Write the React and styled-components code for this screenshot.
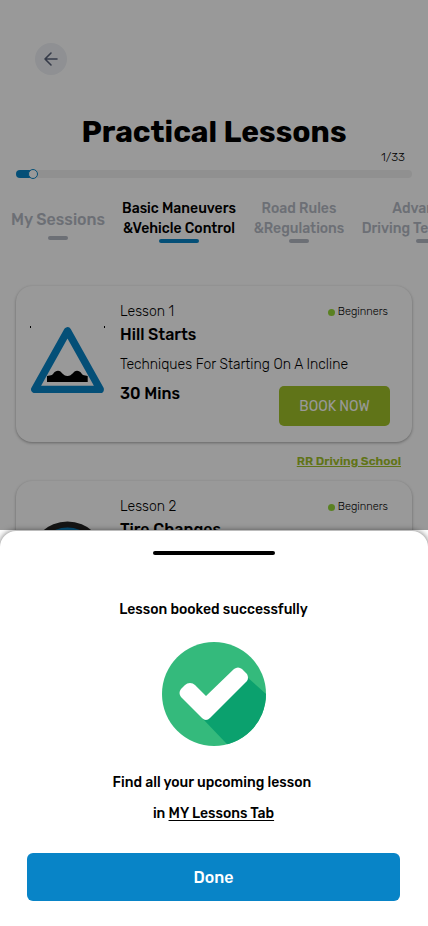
import React, { useState } from "react";
import styled, { createGlobalStyle } from "styled-components";

const blue = "#0884c7";
const lime = "#a1c128";
const muted = "#b4b9c4";

const GlobalStyle = createGlobalStyle`
  *, *::before, *::after { box-sizing: border-box; }
  body {
    margin: 0;
    background: #fff;
    color: #000;
    font-family: Rubik, Inter, "Liberation Sans", sans-serif;
  }
  button { font: inherit; border: 0; padding: 0; cursor: pointer; }
  h1, h2, p { margin: 0; }
`;

const Screen = styled.div`
  display: flex;
  flex-direction: column;
  height: 100vh;
  overflow: hidden;
`;

const Lessons = styled.main`
  position: relative;
  flex: 1;
  min-height: 0;
  overflow: hidden;
`;

const Scrim = styled.div`
  position: absolute;
  inset: 0;
  background: rgba(0, 0, 0, 0.4);
`;

const BackButton = styled.button`
  display: grid;
  place-items: center;
  width: 32px;
  height: 32px;
  margin: 43px 0 0 35px;
  border-radius: 50%;
  background: #eef1f5;
`;

const Title = styled.h1`
  margin-top: 40px;
  font-size: 30px;
  line-height: 34px;
  font-weight: 700;
  text-align: center;
  white-space: nowrap;
`;

const Progress = styled.label`
  display: flex;
  flex-direction: column;
  padding: 0 16px;
`;

const Count = styled.span`
  align-self: flex-end;
  margin-right: 7px;
  font-size: 12px;
  line-height: 16px;
  font-weight: 300;
`;

const Slider = styled.input`
  appearance: none;
  width: 100%;
  height: 8px;
  margin: 5px 0 0;
  border-radius: 4px;
  background: linear-gradient(${blue}, ${blue}) 0 0 / 16px 100% no-repeat #f1f1f1;

  &::-webkit-slider-thumb {
    appearance: none;
    width: 10px;
    height: 10px;
    border: 1px solid ${blue};
    border-radius: 50%;
    background: #fff;
  }
`;

const Tabs = styled.nav`
  display: grid;
  grid-template-columns: 94px 114px 92px 128px;
  column-gap: 17px;
  align-items: end;
  margin-top: 21px;
  padding-left: 11px;
`;

const Tab = styled.button`
  display: flex;
  flex-direction: column;
  align-items: center;
  gap: ${(p) => (p.$single ? 6 : 0)}px;
  padding-bottom: ${(p) => (p.$single ? 3 : 0)}px;
  background: none;
  color: ${(p) => (p.$active ? "#000" : muted)};
  font-size: ${(p) => (p.$single ? 16 : 14)}px;
  line-height: 20px;
  font-weight: 500;
  white-space: nowrap;

  &::after {
    content: "";
    width: ${(p) => (p.$active ? 40 : 20)}px;
    height: 4px;
    border-radius: 2px;
    background: ${(p) => (p.$active ? blue : muted)};
  }
`;

const List = styled.section`
  display: flex;
  flex-direction: column;
  margin-top: 43px;
  padding: 0 16px;
`;

const Card = styled.article`
  display: grid;
  grid-template-columns: 75px 1fr;
  column-gap: 15px;
  min-height: 156px;
  padding: 16px 22px 16px 14px;
  border-radius: 16px;
  background: #fff;
  box-shadow: 0 1px 3px rgba(0, 0, 0, 0.35);
`;

const Sign = styled.svg`
  display: block;
  width: 75px;
  height: 75px;
  margin-top: 20px;
`;

const Details = styled.div`
  display: flex;
  flex-direction: column;
  white-space: nowrap;
`;

const Row = styled.div`
  display: flex;
  justify-content: space-between;
  align-items: flex-start;
`;

const Light = styled.p`
  font-size: 14px;
  line-height: 20px;
  font-weight: 300;
`;

const Strong = styled.p`
  font-size: 16px;
  line-height: 20px;
  font-weight: 500;
`;

const Name = styled(Strong).attrs({ as: "h2" })`
  margin: 3px 0 10px;
`;

const Level = styled.span`
  display: flex;
  align-items: center;
  gap: 3px;
  margin-right: 2px;
  font-size: 11px;
  line-height: 20px;
  font-weight: 300;

  &::before {
    content: "";
    width: 7px;
    height: 7px;
    border-radius: 50%;
    background: #97d83a;
  }
`;

const Booking = styled(Row)`
  margin-top: 9px;
`;

const BookButton = styled.button`
  width: 111px;
  height: 40px;
  margin-top: 2px;
  border-radius: 5px;
  background: ${lime};
  color: #fff;
  font-size: 14px;
`;

const School = styled.a`
  align-self: flex-end;
  margin: 9px 11px 10px;
  color: ${lime};
  font-size: 12px;
  line-height: 20px;
  font-weight: 600;
`;

const Sheet = styled.section`
  position: relative;
  display: flex;
  flex-direction: column;
  align-items: center;
  margin-top: 1px;
  padding: 20px 28px 25px 27px;
  border-radius: 16px 16px 0 0;
  background: #fff;
  box-shadow: 0 0 6px rgba(0, 0, 0, 0.6);
`;

const Handle = styled.span`
  width: 122px;
  height: 4px;
  border-radius: 2px;
  background: #000;
`;

const Message = styled.p`
  font-size: 14px;
  font-weight: 500;
  line-height: 31px;
  text-align: center;

  a { color: inherit; text-underline-offset: 2px; }
`;

const Heading = styled(Message).attrs({ as: "h2" })`
  margin-top: 39px;
`;

const Check = styled.svg`
  width: 104px;
  height: 104px;
  margin: 17px 0 21px;
`;

const DoneButton = styled.button`
  width: 100%;
  height: 48px;
  margin-top: 24px;
  border-radius: 6px;
  background: ${blue};
  color: #fff;
  font-size: 16px;
  font-weight: 500;
`;

const HillSign = () => (
  <Sign viewBox="0 0 75 75" aria-hidden="true">
    <path d="M.5 4v2M74.5 4v2" stroke="#000" />
    <path d="M37.5 8.9 4.8 67.4h65.4z" fill="#fff" stroke={blue} strokeWidth="7.4" strokeLinejoin="round" />
    <path d="M17 60v-6l4-.7c2.5-.6 3-4.6 7-4.6s4.5 5.3 9.5 5.3 5.5-5.3 9.5-5.3 4.5 4 7 4.600l3.700.7v6z" />
  </Sign>
);

const TireSign = () => (
  <Sign viewBox="0 0 75 75" aria-hidden="true">
    <circle cx="37.5" cy="41.5" r="37" fill="#222" />
    <circle cx="37.5" cy="41.5" r="31" fill={blue} />
  </Sign>
);

const tabs = [
  { lines: ["My Sessions"] },
  { lines: ["Basic Maneuvers", "&Vehicle Control"] },
  { lines: ["Road Rules", "&Regulations"] },
  { lines: ["Advanced", "Driving Techniques"] },
];

function LessonCard({ number, name, text, sign }) {
  return (
    <Card>
      {sign}
      <Details>
        <Row>
          <Light>Lesson {number}</Light>
          <Level>Beginners</Level>
        </Row>
        <Name>{name}</Name>
        <Light>{text}</Light>
        <Booking>
          <Strong>30 Mins</Strong>
          <BookButton>BOOK NOW</BookButton>
        </Booking>
      </Details>
    </Card>
  );
}

export default function App() {
  const [active, setActive] = useState(1);
  return (
    <Screen>
      <GlobalStyle />
      <Lessons>
        <BackButton aria-label="Back">
          <svg width="16" height="16" viewBox="0 0 16 16" fill="none" stroke="#5a637b" strokeWidth="1.6" strokeLinecap="round" strokeLinejoin="round">
            <path d="M14 8H2M8 2 2 8l6 6" />
          </svg>
        </BackButton>
        <Title>Practical Lessons</Title>
        <Progress>
          <Count>1/33</Count>
          <Slider type="range" min="0" max="33" value="1" readOnly aria-label="Lessons completed" />
        </Progress>
        <Tabs>
          {tabs.map(({ lines }, i) => (
            <Tab key={lines[0]} $active={i === active} $single={lines.length === 1} onClick={() => setActive(i)}>
              <span>
                {lines[0]}
                {lines[1] && <br />}
                {lines[1]}
              </span>
            </Tab>
          ))}
        </Tabs>
        <List>
          <LessonCard number={1} name="Hill Starts" text="Techniques For Starting On A Incline" sign={<HillSign />} />
          <School href="#school">RR Driving School</School>
          <LessonCard number={2} name="Tire Changes" text="" sign={<TireSign />} />
        </List>
        <Scrim />
      </Lessons>
      <Sheet role="dialog" aria-labelledby="booked">
        <Handle />
        <Heading id="booked">Lesson booked successfully</Heading>
        <Check viewBox="0 0 104 104" aria-hidden="true">
          <clipPath id="disc"><circle cx="52" cy="52" r="52" /></clipPath>
          <g clipPath="url(#disc)">
            <path fill="#34ba7c" d="M0 0h104v104H0z" />
            <path fill="#0ba16e" d="M85 35 115 62v60H84L41 77z" />
          </g>
          <path d="M28 41q-3 0-5 2l-4 4q-3 4 0 8l21 21q4 4 8 0l37-37q2-3 0-7l-5-5q-4-3-8 0L44 54 33 43q-2-2-5-2z" fill="#fff" />
        </Check>
        <Message>
          Find all your upcoming lesson&nbsp;
          <br />
          in <a href="#lessons">MY Lessons Tab</a>
        </Message>
        <DoneButton>Done</DoneButton>
      </Sheet>
    </Screen>
  );
}
